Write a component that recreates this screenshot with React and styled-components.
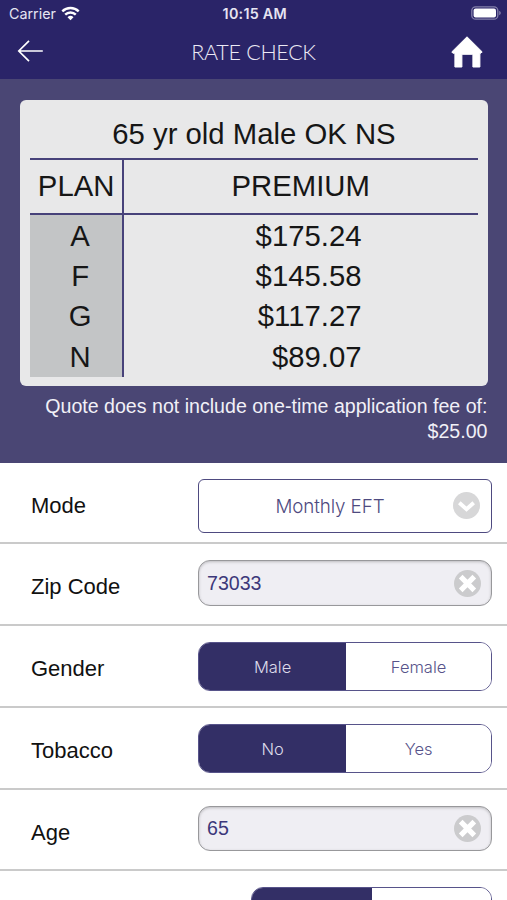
import React, { useState } from 'react';
import styled, { createGlobalStyle } from 'styled-components';

const GlobalStyle = createGlobalStyle`
  * {
    box-sizing: border-box;
  }

  body {
    margin: 0;
    background: #fff;
    font-family: 'Liberation Sans', Arial, sans-serif;
  }
`

const Screen = styled.div`
  height: 900px;
  overflow: hidden;
  background: #fff;
`

const Header = styled.header`
  height: 79px;
  background: #2a2468;
  color: #fff;
`

const StatusBar = styled.div`
  display: grid;
  grid-template-columns: 1fr auto 1fr;
  align-items: center;
  height: 27px;
  padding: 0 6.5px 0 9px;
  font-family: Inter, sans-serif;
  font-size: 14.3px;
  color: #e6e4f2;

  > svg {
    justify-self: end;
    margin-top: -1px;
  }
`

const Carrier = styled.div`
  display: flex;
  align-items: center;
  gap: 5px;
`

const Clock = styled.div`
  font-weight: 600;
  font-size: 14.3px;
  letter-spacing: 0.25px;
`

const TitleBar = styled.div`
  display: grid;
  grid-template-columns: 60px 1fr 60px;
  align-items: center;
  height: 50px;
`

const IconButton = styled.button`
  display: flex;
  justify-content: ${props => props.$end ? 'flex-end' : 'flex-start'};
  padding: 0 ${props => props.$end ? '24px 0 0' : '0 2px 17px'};
  border: 0;
  background: none;
  color: #fff;
  cursor: pointer;
`

const Title = styled.h1`
  margin: 0;
  font-family: Lato, sans-serif;
  font-weight: 300;
  font-size: 21.5px;
  letter-spacing: -0.3px;
  text-align: center;
  color: #eceaf6;
`

const QuotePanel = styled.section`
  height: 383.5px;
  padding: 21px 19.5px 0 20.4px;
  background: #4a4674;
`

const Card = styled.div`
  height: 286px;
  padding: 10px;
  border-radius: 6px;
  background: #e8e8e9;
  color: #161616;
  font-size: 29.3px;
`

const CardTitle = styled.div`
  height: 49.5px;
  line-height: 47px;
  border-bottom: 2.5px solid #47427a;
  text-align: center;
`

const Line = styled.div`
  display: grid;
  grid-template-columns: 93.5px 1fr;
  height: ${props => props.$head ? '55px' : '40.35px'};
  line-height: ${props => props.$head ? '52px' : '41px'};
  border-bottom: ${props => props.$head ? '2px solid #47427a' : '0'};
`

const PlanCell = styled.div`
  padding-left: ${props => props.$head ? '0' : '8px'};
  border-right: 2px solid #47427a;
  background: ${props => props.$head ? 'none' : '#c3c5c6'};
  text-align: center;
`

const PremiumCell = styled.div`
  padding-right: ${props => props.$head ? '0' : '116px'};
  text-align: ${props => props.$head ? 'center' : 'right'};
`

const Note = styled.p`
  margin: 8px 0 0;
  font-size: 19.6px;
  line-height: 24.6px;
  text-align: right;
  color: #f1f0f7;
`

const Row = styled.div`
  display: grid;
  grid-template-columns: 167px minmax(0, 1fr);
  align-items: start;
  height: 81.8px;
  padding: 16px 15px 0 31px;
  border-bottom: 2.4px solid #cacaca;
`

const Label = styled.label`
  padding-top: 14px;
  font-size: 22px;
  line-height: 26px;
  color: #111;
`

const Select = styled.button`
  display: flex;
  align-items: center;
  height: 54.5px;
  padding: 0 11px 0 30px;
  border: 1.5px solid #4e4a80;
  border-radius: 6px;
  background: #fff;
  color: #4e4a80;
  font-family: Inter, sans-serif;
  font-weight: 300;
  font-size: 18.8px;
  letter-spacing: -0.1px;
  cursor: pointer;

  > span {
    flex: 1;
    padding: 2px 22px 0 0;
    text-align: center;
  }
`

const Field = styled.div`
  display: flex;
  align-items: center;
  height: 45.5px;
  padding: 0 10px 0 8px;
  border: 1.5px solid #98989b;
  border-radius: 12px;
  background: #efeef3;
  box-shadow: inset 0 1px 3px rgba(0, 0, 0, 0.22);

  > svg {
    flex: none;
  }
`

const Input = styled.input`
  flex: 1;
  min-width: 0;
  padding: 1px 0 0;
  border: 0;
  outline: 0;
  background: none;
  color: #3c387a;
  font-family: 'Liberation Sans', Arial, sans-serif;
  font-size: 19.6px;
`

const Toggle = styled.div`
  display: grid;
  grid-template-columns: 50.4% 1fr;
  height: 48.7px;
  margin-left: ${props => props.$inset || 0};
  border: 1.5px solid #57538a;
  border-radius: 12px;
  overflow: hidden;
`

const Option = styled.button`
  padding: 1px 0 0;
  border: 0;
  background: ${props => props.$active ? '#332f66' : '#fff'};
  color: ${props => props.$active ? '#dddbea' : '#57538a'};
  font-family: Inter, sans-serif;
  font-weight: 300;
  font-size: 16.5px;
  cursor: pointer;
`

const WifiIcon = () => (
  <svg width="19" height="15" viewBox="0 0 19 15" fill="none" stroke="#fff" strokeWidth="2.4">
    <path d="M1.3 5.4a11.7 11.7 0 0 1 16.4 0" />
    <path d="M4.2 8.7a7.5 7.5 0 0 1 10.6 0" />
    <path d="M9.5 14.3 6.5 11.2a4.3 4.3 0 0 1 6 0z" fill="#fff" stroke="none" />
  </svg>
)

const BatteryIcon = () => (
  <svg width="30" height="14" viewBox="0 0 30 14">
    <rect x="0.8" y="0.8" width="26" height="12.4" rx="3.8" fill="none" stroke="#8480aa" strokeWidth="1.3" />
    <rect x="2.6" y="2.6" width="22.4" height="8.8" rx="2" fill="#fff" />
    <path d="M28.2 4.8q1.6.7 1.6 2.2t-1.6 2.2z" fill="#8480aa" />
  </svg>
)

const BackIcon = () => (
  <svg width="27" height="24" viewBox="0 0 27 24" fill="none" stroke="#fff" strokeWidth="1.7">
    <path d="M12 1.8 1.8 12 12 22.2M1.8 12h24" />
  </svg>
)

const HomeIcon = () => (
  <svg width="32" height="32" viewBox="0 0 32 32" fill="#fff" stroke="#fff" strokeWidth="1" strokeLinejoin="round">
    <path d="M16 .8 31.2 15.9l-1.3 1.3h-1V31h-7V18.3h-11V31h-7V17.2h-2L.8 15.9z" />
  </svg>
)

const DownIcon = () => (
  <svg width="27" height="27" viewBox="0 0 27 27">
    <circle cx="13.5" cy="13.5" r="13.5" fill="#d7d7d8" />
    <path d="m6.3 10.8 7.2 6.4 7.2-6.4" fill="none" stroke="#fff" strokeWidth="3.9" />
  </svg>
)

const ClearIcon = () => (
  <svg width="27" height="27" viewBox="0 0 27 27">
    <circle cx="13.5" cy="13.5" r="13.5" fill="#cbcbcd" />
    <path d="m6.7 6.7 13.6 13.6M20.3 6.7 6.7 20.3" stroke="#fff" strokeWidth="5.2" />
  </svg>
)

const quotes = [
  { plan: 'A', premium: '$175.24' },
  { plan: 'F', premium: '$145.58' },
  { plan: 'G', premium: '$117.27' },
  { plan: 'N', premium: '$89.07' },
]

const Choice = ({ options, inset }) => {
  const [selected, setSelected] = useState(0);

  return (
    <Toggle $inset={inset}>
      {options.map((option, i) => (
        <Option key={i} $active={selected === i} onClick={() => setSelected(i)}>{option}</Option>
      ))}
    </Toggle>
  )
}

const App = () => {
  const [zip, setZip] = useState('73033');
  const [age, setAge] = useState('65');

  return (
    <Screen>
      <GlobalStyle />
      <Header>
        <StatusBar>
          <Carrier>Carrier <WifiIcon /></Carrier>
          <Clock>10:15 AM</Clock>
          <BatteryIcon />
        </StatusBar>
        <TitleBar>
          <IconButton><BackIcon /></IconButton>
          <Title>RATE CHECK</Title>
          <IconButton $end><HomeIcon /></IconButton>
        </TitleBar>
      </Header>
      <QuotePanel>
        <Card>
          <CardTitle>65 yr old Male OK NS</CardTitle>
          <Line $head>
            <PlanCell $head>PLAN</PlanCell>
            <PremiumCell $head>PREMIUM</PremiumCell>
          </Line>
          {quotes.map(({ plan, premium }) => (
            <Line key={plan}>
              <PlanCell>{plan}</PlanCell>
              <PremiumCell>{premium}</PremiumCell>
            </Line>
          ))}
        </Card>
        <Note>Quote does not include one-time application fee of: $25.00</Note>
      </QuotePanel>
      <Row>
        <Label>Mode</Label>
        <Select><span>Monthly EFT</span><DownIcon /></Select>
      </Row>
      <Row>
        <Label>Zip Code</Label>
        <Field>
          <Input value={zip} onChange={(e) => setZip(e.target.value)} />
          <ClearIcon />
        </Field>
      </Row>
      <Row>
        <Label>Gender</Label>
        <Choice options={['Male', 'Female']} />
      </Row>
      <Row>
        <Label>Tobacco</Label>
        <Choice options={['No', 'Yes']} />
      </Row>
      <Row>
        <Label>Age</Label>
        <Field>
          <Input value={age} onChange={(e) => setAge(e.target.value)} />
          <ClearIcon />
        </Field>
      </Row>
      <Row>
        <Label />
        <Choice options={['', '']} inset="53px" />
      </Row>
    </Screen>
  )
}

export default App
